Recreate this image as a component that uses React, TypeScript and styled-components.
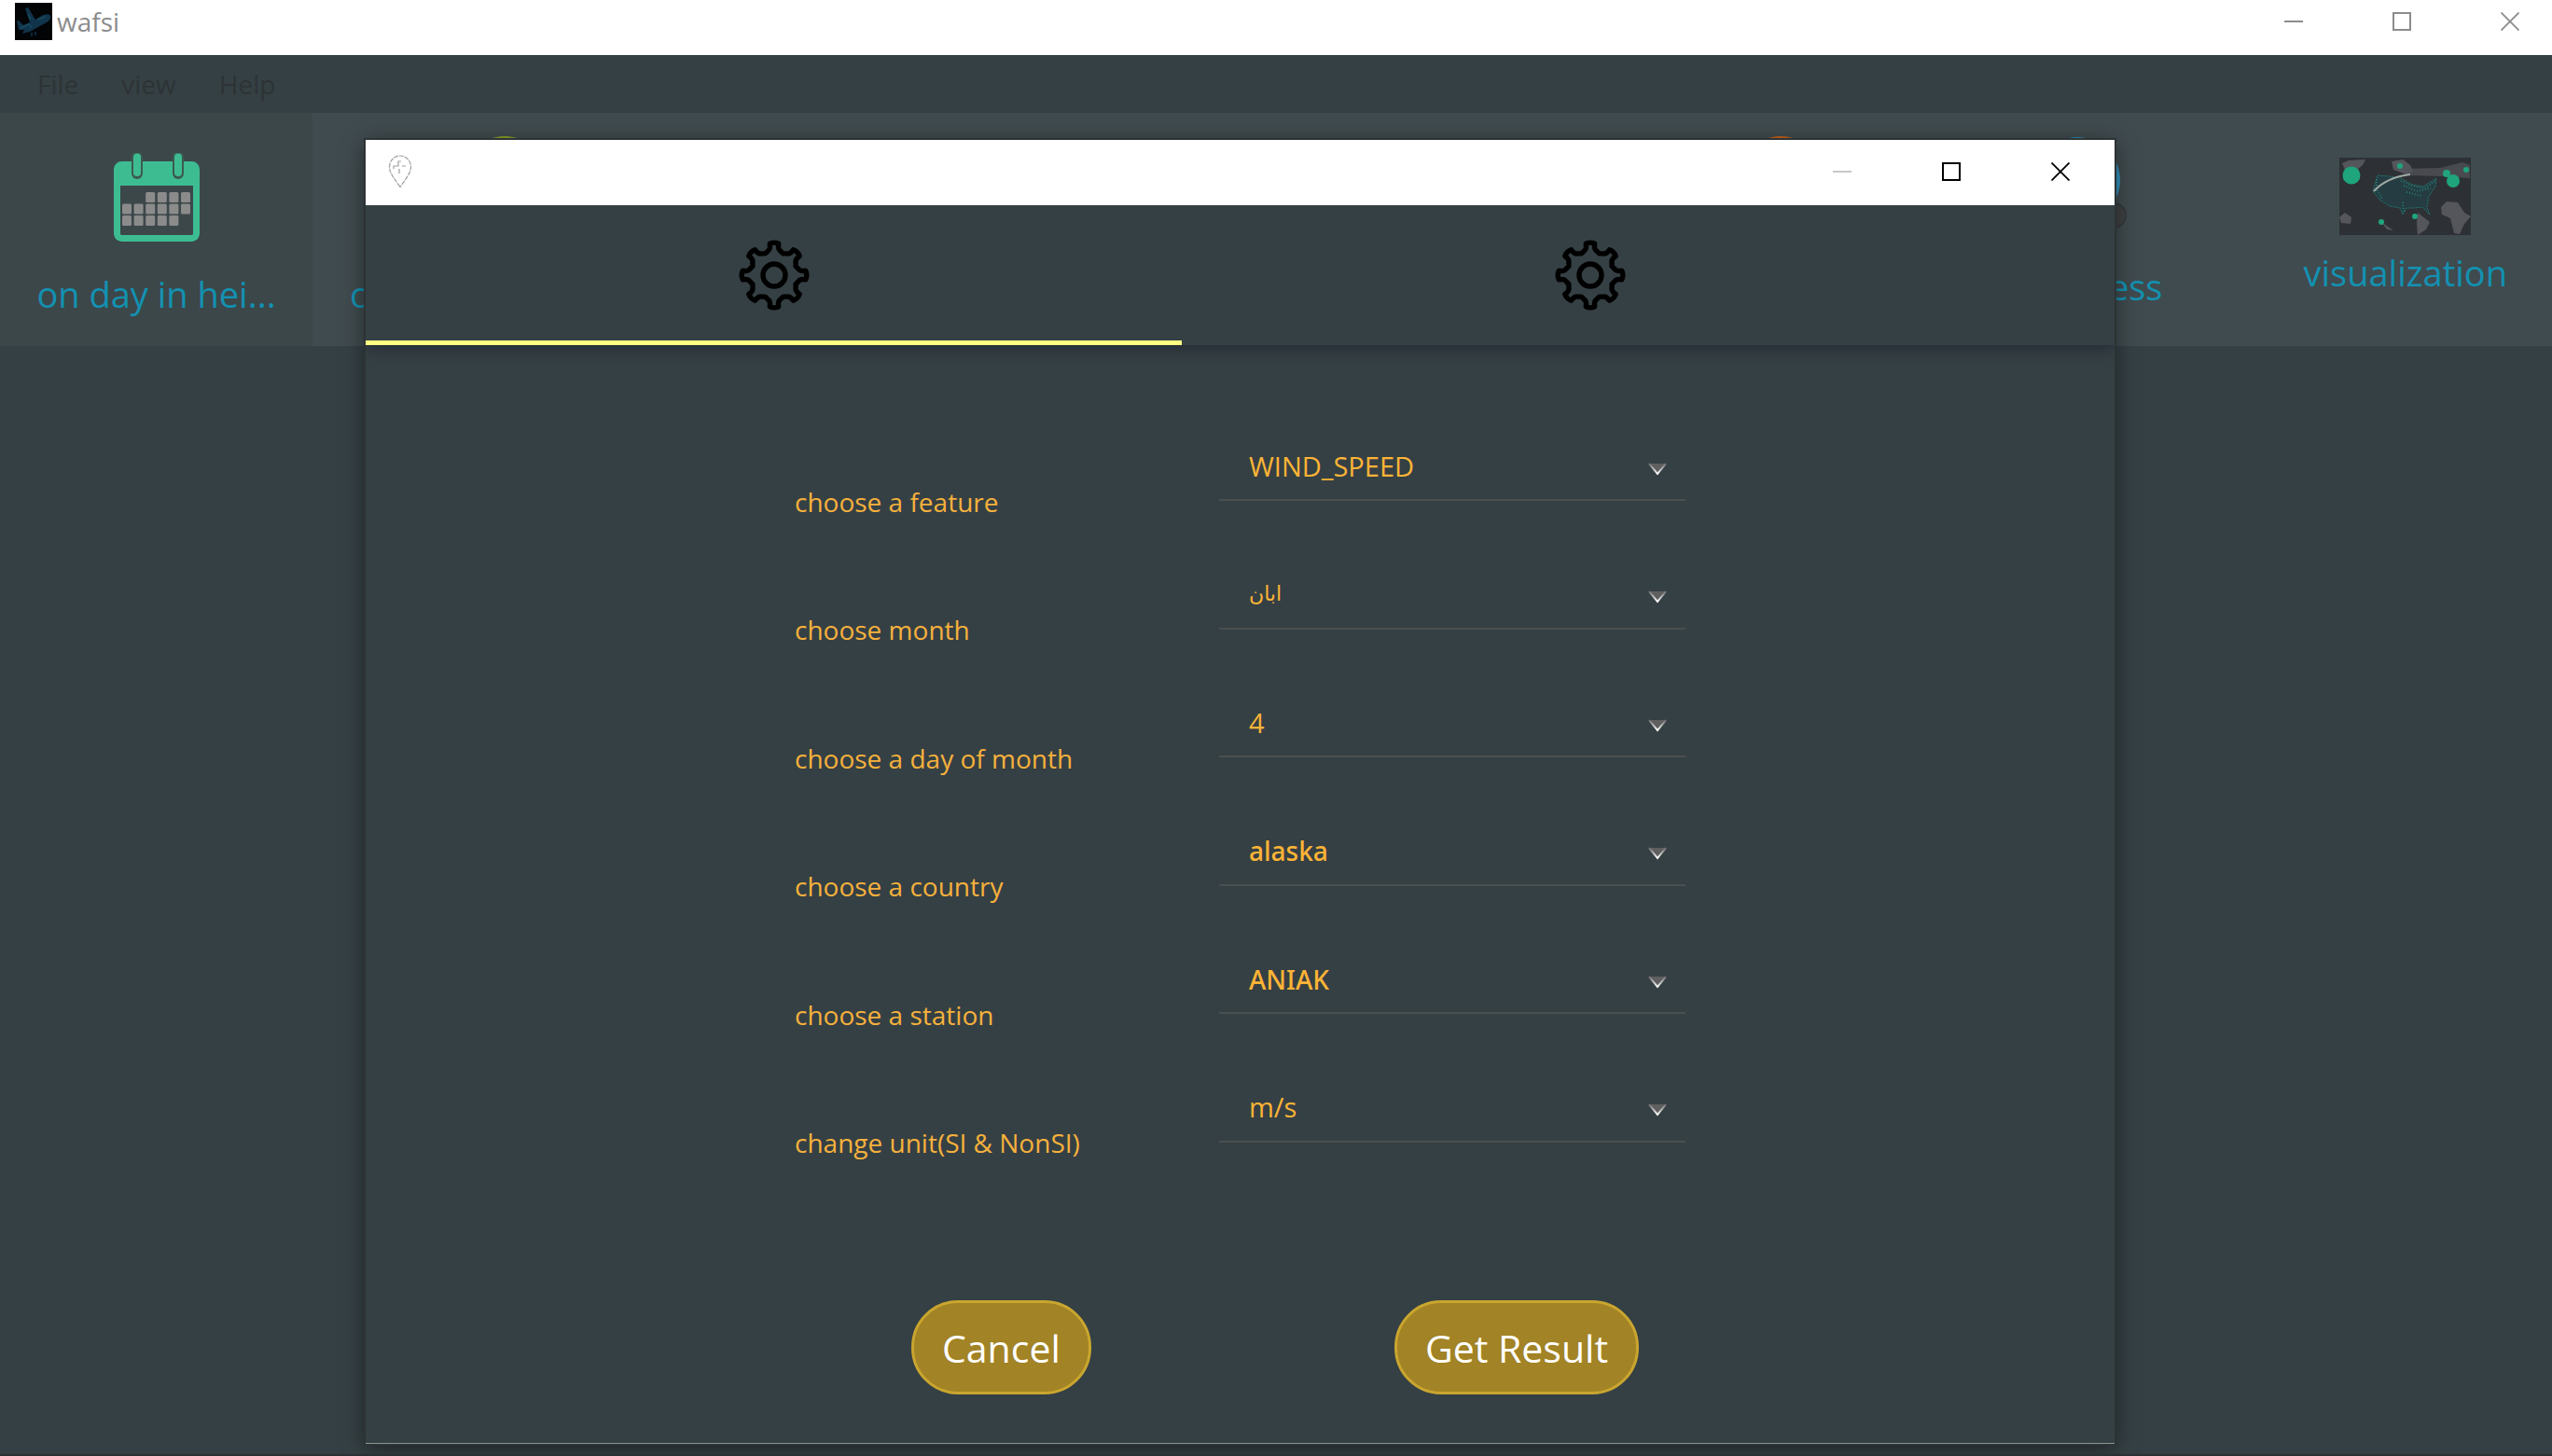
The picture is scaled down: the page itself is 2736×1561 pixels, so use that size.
import React from "react";
import styled, { createGlobalStyle } from "styled-components";

const uiFont = `"Open Sans", "Noto Sans", sans-serif`;

const GlobalStyle = createGlobalStyle`
  * { box-sizing: border-box; }
  body { margin: 0; background: #354044; font-family: ${uiFont}; }
  button, select { font: inherit; color: inherit; }
  button { border: 0; padding: 0; background: none; }
  svg { display: block; }
`;

const AppWindow = styled.div`
  position: relative;
  display: flex;
  flex-direction: column;
  min-height: 100vh;
  background: #354044;
  border-bottom: 2px solid #2b3133;
  overflow: hidden;
`;

const TitleBar = styled.header`
  display: flex;
  align-items: center;
  gap: 5px;
  height: 59px;
  padding: 0 0 13px 16px;
  background: #fff;
`;

const AppTitle = styled.h1`
  flex: 1;
  margin: 0;
  font-size: 28px;
  line-height: 40px;
  font-weight: 400;
  color: #8c8c8c;
`;

const WindowControls = styled.div<{ $gap: number }>`
  display: flex;
  gap: ${(p) => p.$gap}px;
`;

const ControlButton = styled.button<{ $width: number; $color: string }>`
  display: flex;
  align-items: center;
  justify-content: center;
  width: ${(p) => p.$width}px;
  height: 40px;
  color: ${(p) => p.$color};
`;

const MenuBar = styled.nav`
  display: flex;
  align-items: center;
  gap: 46px;
  height: 62px;
  padding: 0 40px;
`;

const MenuButton = styled.button`
  font-size: 28px;
  line-height: 40px;
  color: #2d3335;
`;

const Toolbar = styled.div`
  display: flex;
  height: 250px;
  padding-right: 8px;
  background: #404b4f;
`;

const ToolButton = styled.button<{
  $width?: number;
  $active?: boolean;
  $align?: string;
  $top: number;
  $gap: number;
}>`
  display: flex;
  flex-direction: column;
  align-items: ${(p) => p.$align ?? "center"};
  justify-content: flex-start;
  gap: ${(p) => p.$gap}px;
  width: ${(p) => (p.$width ? `${p.$width}px` : "auto")};
  padding: ${(p) => p.$top}px 40px 0;
  background: ${(p) => (p.$active ? "#3c474a" : "transparent")};
  font-size: 38px;
  line-height: 56px;
  white-space: nowrap;
  color: #1391b1;
`;

const ToolIcon = styled.span`
  align-self: center;
`;

const Spacer = styled.div<{ $width?: number }>`
  flex: ${(p) => (p.$width ? `0 0 ${p.$width}px` : "1")};
`;

const Dialog = styled.section`
  position: absolute;
  inset: 150px 469px 11px 392px;
  display: flex;
  flex-direction: column;
  background: #354044;
  border-bottom: 1px solid #8b9393;
  box-shadow: 0 0 0 2px #2d3335, 0 4px 22px rgba(0, 0, 0, 0.5);
`;

const DialogTitleBar = styled.header`
  display: flex;
  align-items: center;
  justify-content: space-between;
  height: 70px;
  padding: 0 0 2px 24px;
  background: #fff;
`;

const TabList = styled.div`
  display: grid;
  grid-template-columns: 7fr 7fr 1fr;
  height: 150px;
  box-shadow: 0 3px 16px rgba(28, 32, 44, 0.7);
  clip-path: inset(0 0 -30px 0);
`;

const Tab = styled.button<{ $selected?: boolean }>`
  display: flex;
  align-items: center;
  justify-content: center;
  border-top: 5px solid transparent;
  border-bottom: 5px solid ${(p) => (p.$selected ? "#ffff84" : "transparent")};
`;

const Form = styled.form`
  flex: 1;
  display: flex;
  flex-direction: column;
  width: 955px;
  margin: 0 auto;
  padding: 100px 0 52px;
`;

const Fields = styled.div`
  flex: 1;
  display: grid;
  grid-template-rows: repeat(6, 1fr);
  margin-bottom: 99px;
`;

const Field = styled.div`
  display: grid;
  grid-template-columns: 455px 1fr;
  align-items: center;
`;

const FieldLabel = styled.label`
  padding-bottom: 2px;
  font-size: 28px;
  line-height: 40px;
  color: #f6b13c;
`;

const SelectBox = styled.div`
  align-self: start;
  display: grid;
  grid-template-columns: 1fr 40px;
  align-items: center;
  height: 67px;
  border-bottom: 2px solid #4a4f4f;
`;

const Select = styled.select<{ $font?: string; $size?: number; $weight?: number }>`
  grid-area: 1 / 1 / 2 / 3;
  width: 100%;
  height: 65px;
  padding: 0 60px 6px 32px;
  border: 0;
  outline: 0;
  appearance: none;
  background: transparent;
  font-family: ${(p) => p.$font ?? uiFont};
  font-size: ${(p) => p.$size ?? 29}px;
  font-weight: ${(p) => p.$weight ?? 400};
  line-height: 40px;
  color: #fdb436;
`;

const Arrow = styled.svg`
  grid-area: 1 / 2;
  pointer-events: none;
`;

const Actions = styled.div`
  display: flex;
  justify-content: space-between;
  padding: 0 50px 0 125px;
`;

const ActionButton = styled.button`
  height: 101px;
  padding: 0 30px;
  border: 3px solid #caa62f;
  border-radius: 50px;
  background: #a28325;
  font-size: 41px;
  line-height: 56px;
  color: #fff;
`;

const gearPoint = (deg: number, r: number) => {
  const a = ((deg - 90) * Math.PI) / 180;
  return `${(38 + r * Math.cos(a)).toFixed(1)} ${(38 + r * Math.sin(a)).toFixed(1)}`;
};

const gearOutline =
  Array.from({ length: 8 }, (_, i) => {
    const c = i * 45;
    return [
      `${i === 0 ? "M" : "L"}${gearPoint(c - 22.5, 25)}`,
      `L${gearPoint(c - 14, 27)}`,
      `Q${gearPoint(c - 8, 28)} ${gearPoint(c - 8, 34)}`,
      `Q${gearPoint(c, 36)} ${gearPoint(c + 8, 34)}`,
      `Q${gearPoint(c + 8, 28)} ${gearPoint(c + 14, 27)}`,
    ].join("");
  }).join("") + "Z";

const GearIcon = () => (
  <svg width="76" height="76" viewBox="0 0 76 76" fill="none" stroke="#000" strokeWidth="5.4" strokeLinejoin="round">
    <path d={gearOutline} />
    <circle cx="38" cy="38" r="12" />
  </svg>
);

const MinimizeIcon = () => (
  <svg width="20" height="20" stroke="currentColor" strokeWidth="2">
    <path d="M0 10H20" />
  </svg>
);
const MaximizeIcon = () => (
  <svg width="20" height="20" fill="none" stroke="currentColor" strokeWidth="2">
    <rect x="1" y="1" width="18" height="18" />
  </svg>
);
const CloseIcon = () => (
  <svg width="20" height="20" stroke="currentColor" strokeWidth="1.8">
    <path d="M.5 .5L19.5 19.5M19.5 .5L.5 19.5" />
  </svg>
);

const AppLogo = () => (
  <svg width="40" height="40" viewBox="0 0 40 40">
    <rect width="40" height="40" fill="#020406" />
    <path d="M11 6l3-1 8 13 8-5c4-1 7-1 8 1 1 3-1 5-4 7L16 31l-8 2 2-4-6 0-2-10 2 0 5 5 7-3z" fill="#10344a" />
    <path d="M6 27l9-4 3 4M24 18l9-3M14 12l3 6" stroke="#1a4a5e" strokeWidth="1.5" fill="none" />
    <path d="M18 32v4M22 31v4" stroke="#10344a" strokeWidth="1.5" />
  </svg>
);

const PinIcon = () => (
  <svg width="26" height="36" viewBox="0 0 26 36" fill="none" stroke="#a0a0a0" strokeWidth="1.2">
    <path d="M13 34.500C8 27 1.500 20 1.500 13A11.500 12 0 0 1 24.500 13C24.500 20 18 27 13 34.500Z" strokeDasharray="5 1" />
    <path d="M6 15V12H11V7H14M15 12H19M12 15V20" />
  </svg>
);

const calendarCells = [
  [2, 0], [3, 0], [4, 0], [5, 0],
  [0, 1], [1, 1], [2, 1], [3, 1], [4, 1], [5, 1],
  [0, 2], [1, 2], [2, 2], [3, 2], [4, 2],
];

const CalendarIcon = () => (
  <svg width="92" height="95" viewBox="0 0 92 95">
    <rect x="3.500" y="12.500" width="85" height="79" rx="5" fill="none" stroke="#3dbc92" strokeWidth="7" />
    <rect x="3" y="11" width="86" height="24" rx="3" fill="#3dbc92" />
    {[25, 69].map((x) => (
      <path key={x} d={`M${x} 4.500V22`} stroke="#3c5a50" strokeWidth="12" strokeLinecap="round" />
    ))}
    {[25, 69].map((x) => (
      <path key={x} d={`M${x} 4.500V21`} stroke="#3dbc92" strokeWidth="8" strokeLinecap="round" />
    ))}
    {calendarCells.map(([c, r]) => (
      <rect key={`${c}-${r}`} x={9 + c * 12.6} y={42 + r * 12.5} width="10" height="11" rx="1.500" fill="#8b8b8b" />
    ))}
  </svg>
);

const MapIcon = () => (
  <svg width="141" height="83" viewBox="0 0 141 83">
    <rect width="141" height="83" fill="#2d3135" />
    <g fill="#54565c">
      <path d="M3 6L10 3 28 2 25 8 20 12 22 22 8 18z" />
      <path d="M56 4L68 2 76 8 79 15 72 18 58 13z" />
      <path d="M68 12L108 11 132 5 140 8 140 22 110 20 72 19z" opacity=".7" />
      <path d="M0 64L6 59 13 64 12 71 2 70z" />
      <path d="M84 59L97 69 93 77 84 83 83 70z" />
      <path d="M109 53L115 47 127 48 134 59 141 63 134 71 129 82 123 81 119 65 110 61z" />
      <path d="M45 69L58 78 51 77z" />
    </g>
    <path
      d="M41 19L54 20 66 22 78 29 90 31 104 22 103 31 96 41 94 53 97 61 89 53 80 54 72 54 68 61 65 54 54 52 43 45 36 36z"
      fill="#243c42"
      stroke="#24756f"
      strokeWidth="1"
      strokeDasharray="2 1"
    />
    <g fill="none" stroke="#2b9588" strokeWidth="2" strokeDasharray="1 2" opacity=".7">
      <path d="M66 25L78 30 91 33 103 25M69 30L84 36 98 33M72 37L88 41M68 48L69 58M40 23L40 34 46 44" />
    </g>
    <path d="M37 36C47 25 60 20 76 18" stroke="#9faaa5" strokeWidth="2" fill="none" />
    <g fill="#1fa57b">
      <circle cx="13" cy="19" r="9.500" />
      <circle cx="65" cy="9" r="3" />
      <circle cx="122" cy="25" r="7" />
      <circle cx="115" cy="17" r="4" />
      <circle cx="136" cy="13" r="3" />
      <circle cx="45" cy="69" r="3" />
      <circle cx="81" cy="63" r="3" />
    </g>
  </svg>
);

const DiscIcon = ({ color }: { color: string }) => (
  <svg width="92" height="92" viewBox="0 0 92 92">
    <circle cx="46" cy="46" r="46" fill={color} />
  </svg>
);

const MagnifierIcon = () => (
  <svg width="106" height="100" viewBox="0 0 106 100">
    <circle cx="92" cy="84" r="13" fill="#404143" stroke="#34393b" strokeWidth="2" />
    <circle cx="53" cy="46" r="46" fill="#348fba" />
  </svg>
);

interface FieldSpec {
  id: string;
  label: string;
  value: string;
  font?: string;
  size?: number;
  weight?: number;
}

const fields: FieldSpec[] = [
  { id: "feature", label: "choose a feature", value: "WIND_SPEED" },
  { id: "month", label: "choose month", value: "ابان", font: `"DejaVu Sans", sans-serif`, size: 22 },
  { id: "day", label: "choose a day of month", value: "4" },
  { id: "country", label: "choose a country", value: "alaska", font: `"Noto Sans", sans-serif`, size: 28, weight: 500 },
  { id: "station", label: "choose a station", value: "ANIAK", font: `"Noto Sans", sans-serif`, size: 28, weight: 500 },
  { id: "unit", label: "change unit(SI & NonSI)", value: "m/s" },
];

const SelectArrow = () => (
  <Arrow width="20" height="14" viewBox="0 0 20 14">
    <defs>
      <linearGradient id="arrowEdge" x1="0" y1="0" x2="0" y2="1">
        <stop offset="0" stopColor="#6a6a6a" />
        <stop offset="1" stopColor="#fff" />
      </linearGradient>
    </defs>
    <path d="M1 1H19L10 12Z" fill="#5f5f5f" />
    <path d="M1 1L10 12L19 1" fill="none" stroke="url(#arrowEdge)" strokeWidth="2" />
  </Arrow>
);

const Controls = ({ width, gap, color, minColor }: { width: number; gap: number; color: string; minColor: string }) => (
  <WindowControls $gap={gap}>
    <ControlButton $width={width} $color={minColor} aria-label="Minimize"><MinimizeIcon /></ControlButton>
    <ControlButton $width={width} $color={color} aria-label="Maximize"><MaximizeIcon /></ControlButton>
    <ControlButton $width={width} $color={color} aria-label="Close"><CloseIcon /></ControlButton>
  </WindowControls>
);

export default function App() {
  return (
    <AppWindow>
      <GlobalStyle />
      <TitleBar>
        <AppLogo />
        <AppTitle>wafsi</AppTitle>
        <Controls width={90} gap={26} color="#8c8c8c" minColor="#8c8c8c" />
      </TitleBar>
      <MenuBar>
        <MenuButton>File</MenuButton>
        <MenuButton>view</MenuButton>
        <MenuButton>Help</MenuButton>
      </MenuBar>
      <Toolbar>
        <ToolButton $width={335} $active $top={43} $gap={28}>
          <ToolIcon><CalendarIcon /></ToolIcon>
          on day in hei...
        </ToolButton>
        <ToolButton $width={412} $top={25} $gap={49} $align="flex-start">
          <ToolIcon><DiscIcon color="#8ba32a" /></ToolIcon>
          o
        </ToolButton>
        <Spacer />
        <ToolButton $width={374} $top={25} $gap={49} aria-label="Chart">
          <ToolIcon><DiscIcon color="#c8641a" /></ToolIcon>
        </ToolButton>
        <ToolButton $width={262} $top={26} $gap={32} $align="flex-end">
          <ToolIcon><MagnifierIcon /></ToolIcon>
          ess
        </ToolButton>
        <Spacer $width={71} />
        <ToolButton $top={48} $gap={12}>
          <ToolIcon><MapIcon /></ToolIcon>
          visualization
        </ToolButton>
      </Toolbar>
      <Dialog role="dialog" aria-label="Settings">
        <DialogTitleBar>
          <PinIcon />
          <Controls width={117} gap={0} color="#000" minColor="#c8c8c8" />
        </DialogTitleBar>
        <TabList role="tablist">
          <Tab role="tab" aria-selected="true" aria-label="Settings" $selected><GearIcon /></Tab>
          <Tab role="tab" aria-selected="false" aria-label="More settings"><GearIcon /></Tab>
        </TabList>
        <Form onSubmit={(e) => e.preventDefault()}>
          <Fields>
            {fields.map((f) => (
              <Field key={f.id}>
                <FieldLabel htmlFor={f.id}>{f.label}</FieldLabel>
                <SelectBox>
                  <Select id={f.id} $font={f.font} $size={f.size} $weight={f.weight}>
                    <option>{f.value}</option>
                  </Select>
                  <SelectArrow />
                </SelectBox>
              </Field>
            ))}
          </Fields>
          <Actions>
            <ActionButton type="button">Cancel</ActionButton>
            <ActionButton type="submit">Get Result</ActionButton>
          </Actions>
        </Form>
      </Dialog>
    </AppWindow>
  );
}
